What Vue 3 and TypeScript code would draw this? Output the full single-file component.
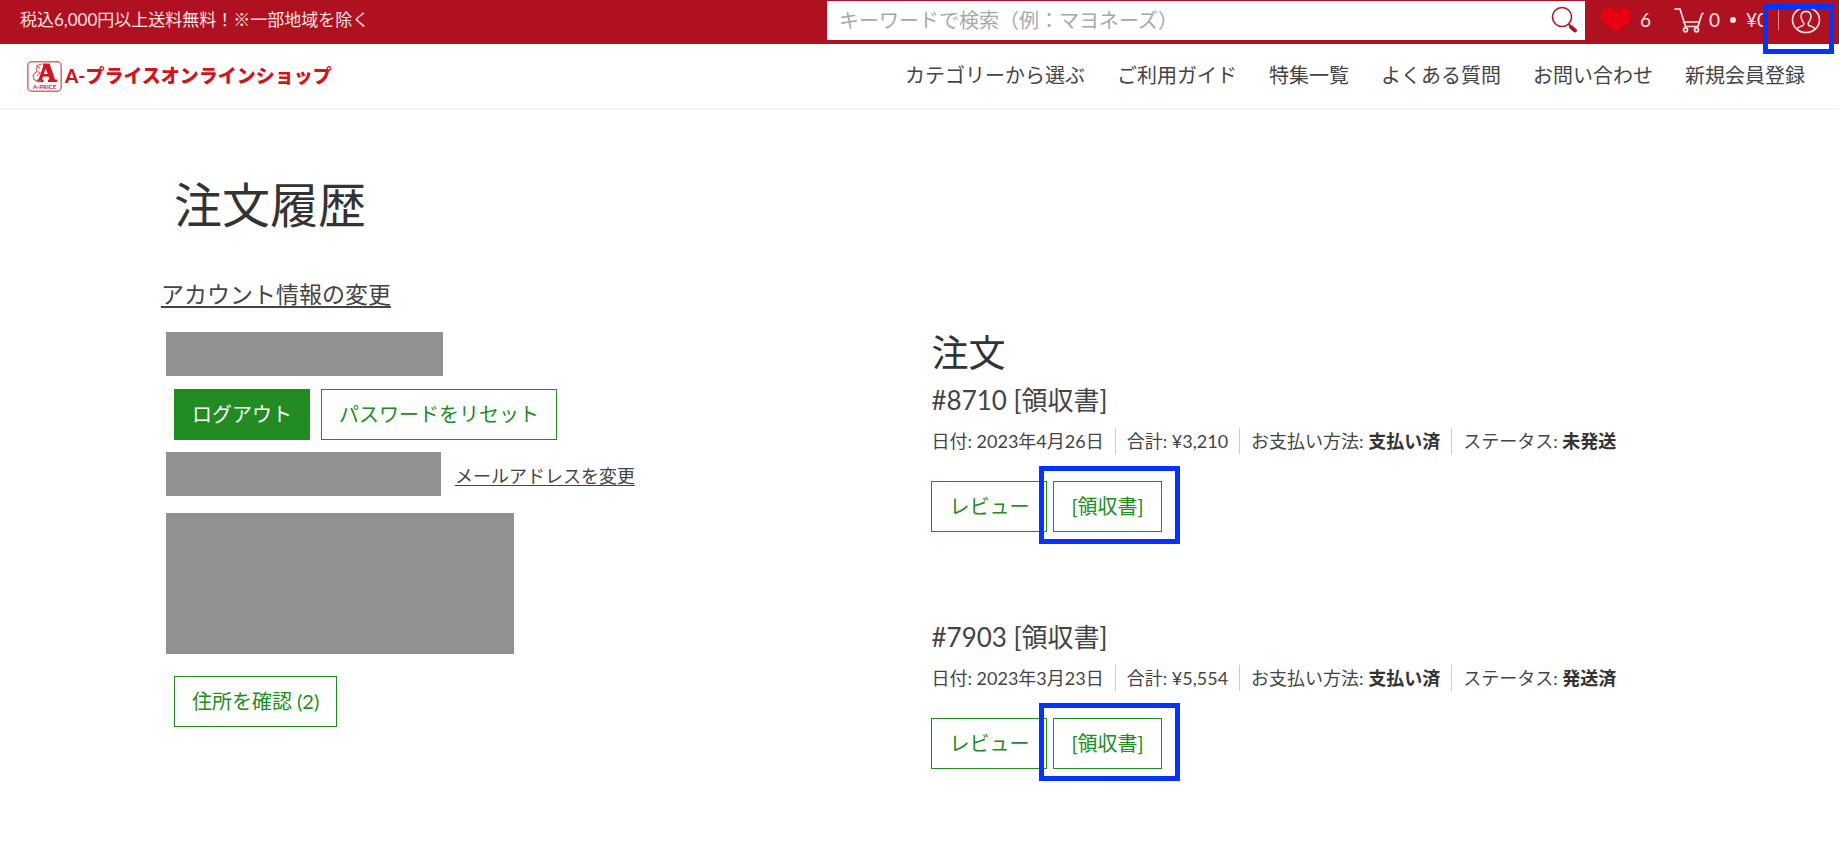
<script setup lang="ts">
interface Order {
  number: string
  date: string
  total: string
  payment: string
  status: string
}

const navItems: string[] = [
  'カテゴリーから選ぶ',
  'ご利用ガイド',
  '特集一覧',
  'よくある質問',
  'お問い合わせ',
  '新規会員登録',
]

const orders: Order[] = [
  { number: '#8710', date: '2023年4月26日', total: '¥3,210', payment: '支払い済', status: '未発送' },
  { number: '#7903', date: '2023年3月23日', total: '¥5,554', payment: '支払い済', status: '発送済' },
]
</script>

<template>
  <div class="page">
    <header>
      <div class="topbar">
        <p class="notice">税込6,000円以上送料無料！※一部地域を除く</p>
        <form class="search" role="search" @submit.prevent>
          <input type="search" aria-label="キーワードで検索" placeholder="キーワードで検索（例：マヨネーズ）" />
          <button type="submit" aria-label="検索">
            <svg width="28" height="28" viewBox="0 0 28 28" fill="none" stroke="#a8182a">
              <circle cx="11" cy="11" r="9.5" stroke-width="1.6" />
              <path d="M17.5 18l3 3" stroke-width="1.8" />
              <path d="M20 21l4 3.500" stroke-width="4" stroke-linecap="round" />
            </svg>
          </button>
        </form>
        <div class="tools">
          <a href="#" class="tool favorites" aria-label="お気に入り 6">
            <svg width="32" height="26" viewBox="0 0 32 26" fill="#e60012">
              <path d="M16 25.500C13 22 1 17 1 8.500C1 3.500 4.500 1 8.500 1C12 1 14.500 2 16 3.500C17.500 2 20 1 23.500 1C27.500 1 31 3.500 31 8.500C31 17 19 22 16 25.500Z" />
            </svg>
            <span>6</span>
          </a>
          <a href="#" class="tool cart" aria-label="カート">
            <svg width="30" height="26" viewBox="0 0 30 26" fill="none" stroke="#fbe3e4" stroke-width="1.700" stroke-linejoin="round" stroke-linecap="round">
              <path d="M1 2h5l5.500 17.500h12.500l4-13h1.500" />
              <path d="M9.500 15h15.500" />
              <circle cx="11.500" cy="22.800" r="2" />
              <circle cx="22.500" cy="22.800" r="2" />
            </svg>
            <span>0</span>
            <span class="dot"></span>
            <span>¥0</span>
          </a>
          <a href="#" class="account" aria-label="アカウント">
            <svg width="30" height="28" viewBox="0 0 30 28" fill="none" stroke="#fbe3e4" stroke-width="1.600" stroke-linejoin="round">
              <ellipse cx="15" cy="14" rx="13.500" ry="12.500" />
              <path d="M6 23c1-2.500 4-2.500 6-3.500c1.500-1 .8-2.500-.3-4c-1.200-1.600-1.600-3-1.600-5c0-3.200 2-5 4.900-5s4.900 1.800 4.900 5c0 2-.4 3.400-1.600 5c-1.100 1.500-1.800 3-.3 4c2 1 5 1 6 3.500" />
            </svg>
          </a>
        </div>
      </div>

      <div class="mainbar">
        <a href="#" class="logo">
          <svg width="35" height="31" viewBox="0 0 35 31" aria-hidden="true">
            <rect x="0.800" y="0.800" width="33.400" height="29.400" rx="4" fill="#fff" stroke="#dc6a70" stroke-width="1.500" />
            <path fill-rule="evenodd" d="M16 2.500h6.500l5.500 16h2v2.500h-9v-2.500h1.500l-1-3h-5.500l-1 3h1.500v2.500h-6.500v-2.500h1.500l5-14h-.5zM18.700 7.500l-2 5.500h4z" fill="#d2141f" />
            <path d="M15 3l-5 1.500l-.5 6l-3.500 4l1 4l4 2.500l3-1.500M10 5l3 2.500M9.500 10.500l3.500 1l-2.500 3.500" fill="none" stroke="#dc6a70" stroke-width="1.200" />
            <text x="17.500" y="28" text-anchor="middle" font-size="6" font-weight="700" fill="#d2141f">A-PRICE</text>
          </svg>
          <span>A-プライスオンラインショップ</span>
        </a>
        <nav>
          <a v-for="item in navItems" :key="item" href="#">{{ item }}</a>
        </nav>
      </div>
    </header>

    <main>
      <h1>注文履歴</h1>
      <div class="columns">
        <section class="profile">
          <a href="#" class="edit">アカウント情報の変更</a>
          <div class="mask name"></div>
          <div class="actions">
            <button type="button" class="btn solid">ログアウト</button>
            <button type="button" class="btn">パスワードをリセット</button>
          </div>
          <div class="email">
            <div class="mask"></div>
            <a href="#">メールアドレスを変更</a>
          </div>
          <div class="mask address"></div>
          <button type="button" class="btn addresses">住所を確認 (2)</button>
        </section>

        <section class="orders">
          <h2>注文</h2>
          <article v-for="order in orders" :key="order.number">
            <h3>{{ order.number }} [領収書]</h3>
            <ul>
              <li>日付: {{ order.date }}</li>
              <li>合計: {{ order.total }}</li>
              <li>お支払い方法: <strong>{{ order.payment }}</strong></li>
              <li>ステータス: <strong>{{ order.status }}</strong></li>
            </ul>
            <div class="order-actions">
              <button type="button" class="btn">レビュー</button>
              <div class="receipt">
                <button type="button" class="btn">[領収書]</button>
              </div>
            </div>
          </article>
        </section>
      </div>
    </main>
  </div>
</template>

<style>
body {
  margin: 0;
  background: #fff;
}
</style>

<style scoped>
.page {
  font-family: Lato, "Noto Sans CJK JP", sans-serif;
  font-weight: 400;
  color: #444;
}

.page * {
  box-sizing: border-box;
}

a {
  color: inherit;
  text-decoration: none;
}

h1, h2, h3, p, ul {
  margin: 0;
  padding: 0;
  font-weight: inherit;
}

h1, h2, strong {
  color: #333;
}

svg {
  display: block;
  flex: none;
}

.topbar {
  display: flex;
  align-items: center;
  height: 44px;
  padding: 0 18px 4px 20px;
  background: #b01120;
  color: #fbe3e4;
}

.notice {
  flex: 1;
  font-size: 17px;
  line-height: 24px;
}

.search {
  display: flex;
  width: 758px;
  height: 39px;
  background: #fff;
}

.search input {
  flex: 1;
  min-width: 0;
  border: 0;
  padding: 0 12px;
  background: none;
  font: inherit;
  font-size: 20px;
  color: #333;
}

.search input::placeholder {
  color: #a8a8a8;
}

.search button {
  border: 0;
  padding: 0 6px;
  background: none;
}

.tools {
  display: flex;
  align-items: center;
  width: 236px;
  padding-left: 15px;
}

.tool {
  display: flex;
  align-items: center;
  font-size: 19px;
  line-height: 24px;
}

.favorites {
  gap: 8px;
}

.cart {
  gap: 5px;
  margin-left: 23px;
}

.dot {
  width: 6px;
  height: 6px;
  margin: 0 5px;
  border-radius: 50%;
  background: #fbe3e4;
}

.account {
  position: relative;
  border-left: 1px solid #e08a90;
  margin-left: auto;
  padding-left: 12px;
  height: 20px;
  display: flex;
  align-items: center;
}

.account::after,
.receipt::after {
  content: "";
  position: absolute;
  border: 5px solid #0433ff;
  pointer-events: none;
}

.account::after {
  inset: -6px -13px -24px -16px;
}

.mainbar {
  display: flex;
  align-items: center;
  justify-content: space-between;
  height: 66px;
  padding: 0 34px 0 27px;
  border-bottom: 2px solid #f2f2f2;
}

.logo {
  display: flex;
  align-items: center;
  gap: 3px;
  font-size: 19px;
  font-weight: 900;
  line-height: 28px;
  color: #d2141f;
  white-space: nowrap;
}

nav {
  display: flex;
  gap: 32px;
  padding-bottom: 2px;
  font-size: 20px;
  line-height: 28px;
  white-space: nowrap;
}

main {
  width: 82.5%;
  margin: 0 auto;
  padding: 65px 0 60px;
}

h1 {
  padding-left: 13px;
  font-size: 48px;
  line-height: 60px;
}

.columns {
  display: grid;
  grid-template-columns: 1fr 1fr;
  gap: 24px;
  margin-top: 43px;
}

.profile {
  display: flex;
  flex-direction: column;
  align-items: flex-start;
}

.edit {
  font-size: 23px;
  line-height: 32px;
  text-decoration: underline;
  text-underline-offset: 3px;
}

.mask {
  width: 277px;
  height: 44px;
  margin-left: 5px;
  background: #919191;
}

.name {
  margin-top: 22px;
}

.actions {
  display: flex;
  gap: 11px;
  margin: 13px 0 12px 13px;
}

.btn {
  height: 51px;
  padding: 0 17px 2px;
  border: 1px solid #228b22;
  background: #fff;
  font: inherit;
  font-size: 20px;
  line-height: 28px;
  color: #228b22;
  white-space: nowrap;
}

.btn.solid {
  background: #228b22;
  color: #fff;
}

.email {
  display: flex;
  align-items: center;
  gap: 14px;
}

.email .mask {
  width: 275px;
}

.email a {
  padding-top: 4px;
  font-size: 18px;
  line-height: 26px;
  text-decoration: underline;
  text-underline-offset: 2px;
}

.address {
  width: 348px;
  height: 141px;
  margin-top: 17px;
}

.addresses {
  margin: 22px 0 0 13px;
}

.orders {
  padding-top: 53px;
}

h2 {
  margin-bottom: 7px;
  font-size: 37px;
  line-height: 44px;
}

article + article {
  margin-top: 87px;
}

h3 {
  font-size: 26px;
  line-height: 36px;
}

ul {
  display: flex;
  margin-top: 10px;
  list-style: none;
  font-size: 18px;
  line-height: 26px;
  white-space: nowrap;
}

li + li {
  margin-left: 11px;
  padding-left: 11px;
  border-left: 1px solid #ccc;
}

strong {
  font-weight: 700;
}

.order-actions {
  display: flex;
  gap: 6px;
  margin-top: 27px;
}

.receipt {
  position: relative;
}

.receipt::after {
  inset: -15px -18px -12px -14px;
}
</style>
